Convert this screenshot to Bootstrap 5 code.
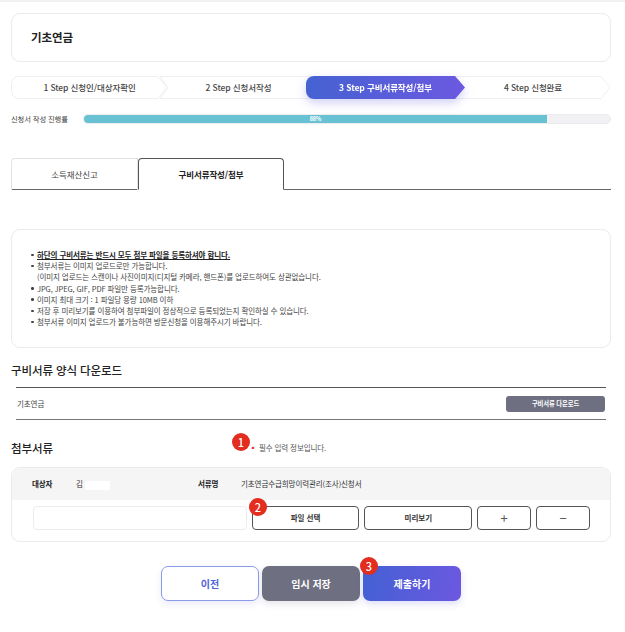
<!DOCTYPE html>
<html lang="ko">
<head>
<meta charset="utf-8">
<title>기초연금</title>
<link href="https://cdn.jsdelivr.net/npm/bootstrap@5.3.0/dist/css/bootstrap.min.css" rel="stylesheet">
<style>
html,body{margin:0;background:#fff}
body{width:625px;height:632px;overflow:hidden;font-family:"Noto Sans CJK KR","Noto Sans",sans-serif;color:#333;font-size:8px;letter-spacing:-.1px}
.topstrip{height:2px;background:#f1f1f3;margin-bottom:11px}
.pagewrap{padding:0 14px 0 11px}
.boxed{border:1px solid #ebebee;border-radius:9px;background:#fff}
.titlebox{height:49px;padding-left:19px;font-size:11.5px;font-weight:700;color:#222}
.stepbar{height:23px;margin-top:14px}
.stepitem{position:relative;height:23px;font-size:8.5px;color:#444;font-weight:500;z-index:1}
.stepitem svg{position:absolute;inset:0;width:100%;height:100%;z-index:-1;overflow:visible}
.s1{width:157px}
.s2{width:155px;margin-left:-8px;padding-left:2px}
.s3{width:159px;margin-left:-9px;color:#fff;font-weight:700;z-index:2;filter:drop-shadow(0 4px 5px rgba(90,90,220,.28))}
.s4{width:156px;margin-left:-10px}
.progrow{height:10px;margin-top:15px}
.proglabel{width:73px;font-size:7.3px;color:#444}
.progtrack{width:527px;height:10px;background:#f1f1f3;border:1px solid #ececef;border-radius:5px;overflow:hidden}
.progfill{height:100%;background:#68c2d4;color:#fff;font-size:5.5px;font-weight:700;line-height:8px;text-align:center}
.tabrow{margin-top:34px;height:32px;border-bottom:1px solid #666}
.tabitem{height:32px;font-size:8.5px}
.tabidle{width:127px;border:1px solid #e3e3e6;border-bottom:0;border-radius:4px 0 0 0;color:#444}
.tabon{width:146px;border:1px solid #555;border-bottom:1px solid #fff;border-radius:4px 4px 0 0;font-weight:700;color:#222;height:32px;background:#fff}
.noticebox{margin-top:39px;height:119px;padding:19px 16px 0 19px}
.noticebox ul{list-style:none;margin:0;padding:0;font-size:7.5px;line-height:11.2px;color:#444}
.noticebox li{position:relative;padding-left:6px}
.noticebox li.dot::before{content:"";position:absolute;left:0;top:4.5px;width:2.5px;height:2.5px;border-radius:50%;background:#444}
.strongline{font-weight:700;color:#222;text-decoration:underline}
.secthead{font-size:11.5px;font-weight:500;color:#222;line-height:16px}
.dltitle{margin-top:14px}
.dlrow{margin:9px 0 0 5px;width:590px;height:33px;border-top:1px solid #555;border-bottom:1px solid #777;padding:0 1px;font-size:7.5px;color:#444}
.dlbtn{width:99px;height:16px;background:#6f6f82;color:#fff;border-radius:3px;font-size:6.3px;font-weight:700}
.reqrow{margin-top:20px;height:16px;position:relative}
.reqnote{position:absolute;left:238px;top:2px;font-size:7.5px;color:#555}
.reqnote b{color:#e2342b;font-size:8px}
.attachbox{margin-top:11px;height:75px;overflow:hidden;background:#fff}
.attachhead{height:32px;background:#f5f5f6;font-size:7.5px;padding-left:20px}
.lbl{font-weight:700;color:#222}
.attachbody{padding:6px 20px 0 21px;gap:5px}
.fakefield{width:214px;height:24px;border:1px solid #ececef;border-radius:4px;background:#fff}
.linebtn{height:24px;border:1px solid #555;border-radius:4px;background:#fff;font-size:7.5px;font-weight:700;color:#333;padding:0}
.w107{width:108px}.w54{width:54px;font-size:13px;font-weight:400;color:#555}
.actions{margin-top:24px;height:35px;padding-left:150px;gap:3px;position:relative}
.actbtn{width:98px;height:35px;border-radius:7px;font-size:10px;font-weight:700;border:0;padding:0}
.actprev{background:#fff;border:1px solid #8a9be8;color:#4c63d8;box-shadow:0 3px 7px rgba(90,90,220,.12)}
.actsave{background:#6f6f82;color:#fff;box-shadow:0 3px 7px rgba(90,90,130,.15)}
.actsend{background:linear-gradient(100deg,#4361d3,#6c58e0);color:#fff;box-shadow:0 3px 7px rgba(90,90,220,.2)}
.markdot{position:absolute;width:18px;height:18px;border-radius:50%;background:#e22d1f;color:#fff;font-size:11px;font-weight:500;line-height:18px;text-align:center;z-index:5;letter-spacing:0}
.mask{display:inline-block;width:25px;height:9px;background:#fff;vertical-align:middle}
</style>
</head>
<body>
<div class="topstrip"></div>
<div class="pagewrap position-relative">
  <div class="boxed titlebox d-flex align-items-center">기초연금</div>

  <div class="stepbar d-flex">
    <div class="stepitem s1 d-flex align-items-center justify-content-center">
      <svg viewBox="0 0 157 23" preserveAspectRatio="none"><path d="M8 .5H147L156 11.5L147 22.5H8A7.5 7.5 0 0 1 .5 15V8A7.5 7.5 0 0 1 8 .5Z" fill="#fff" stroke="#efeff2"/></svg>
      1 Step 신청인/대상자확인</div>
    <div class="stepitem s2 d-flex align-items-center justify-content-center">
      <svg viewBox="0 0 155 23" preserveAspectRatio="none"><path d="M0 .5H150V22.5H0L8 11.5Z" fill="#fff" stroke="#efeff2"/></svg>
      2 Step 신청서작성</div>
    <div class="stepitem s3 d-flex align-items-center justify-content-center">
      <svg viewBox="0 0 159 23" preserveAspectRatio="none"><defs><linearGradient id="g" x1="0" x2="1"><stop offset="0" stop-color="#4562d2"/><stop offset="1" stop-color="#6b59e0"/></linearGradient></defs><path d="M8 0H149L159 11.5L149 23H8A8 8 0 0 1 0 15V8A8 8 0 0 1 8 0Z" fill="url(#g)"/></svg>
      3 Step 구비서류작성/첨부</div>
    <div class="stepitem s4 d-flex align-items-center justify-content-center">
      <svg viewBox="0 0 157 23" preserveAspectRatio="none"><path d="M0 .5H147L156 11.5L147 22.5H0" fill="#fff" stroke="#efeff2"/></svg>
      4 Step 신청완료</div>
  </div>

  <div class="progrow d-flex align-items-center">
    <div class="proglabel" style="width:72px">신청서 작성 진행률</div>
    <div class="progtrack" style="width:528px"><div class="progfill" style="width:88%">88%</div></div>
  </div>

  <div class="tabrow d-flex">
    <div class="tabitem tabidle d-flex align-items-center justify-content-center">소득재산신고</div>
    <div class="tabitem tabon d-flex align-items-center justify-content-center">구비서류작성/첨부</div>
  </div>

  <div class="boxed noticebox">
    <ul>
      <li class="dot strongline">하단의 구비서류는 반드시 모두 첨부 파일을 등록하셔야 합니다.</li>
      <li class="dot">첨부서류는 이미지 업로드로만 가능합니다.</li>
      <li>(이미지 업로드는 스캔이나 사진이미지(디지털 카메라, 핸드폰)를 업로드하여도 상관없습니다.</li>
      <li class="dot">JPG, JPEG, GIF, PDF 파일만 등록가능합니다.</li>
      <li class="dot">이미지 최대 크기 : 1 파일당 용량 10MB 이하</li>
      <li class="dot">저장 후 미리보기를 이용하여 첨부파일이 정상적으로 등록되었는지 확인하실 수 있습니다.</li>
      <li class="dot">첨부서류 이미지 업로드가 불가능하면 방문신청을 이용해주시기 바랍니다.</li>
    </ul>
  </div>

  <div class="secthead dltitle">구비서류 양식 다운로드</div>
  <div class="dlrow d-flex align-items-center justify-content-between">
    <span>기초연금</span>
    <span class="dlbtn d-flex align-items-center justify-content-center">구비서류 다운로드</span>
  </div>

  <div class="reqrow">
    <div class="secthead">첨부서류</div>
    <div class="reqnote"><b>▪</b> 필수 입력 정보입니다.</div>
    <span class="markdot" style="left:221px;top:-7px">1</span>
  </div>

  <div class="boxed attachbox">
    <div class="attachhead d-flex align-items-center">
      <span class="lbl" style="width:44px">대상자</span>
      <span style="width:122px">김 <span class="mask"></span></span>
      <span class="lbl" style="width:43px">서류명</span>
      <span>기초연금수급희망이력관리(조사)신청서</span>
    </div>
    <div class="attachbody d-flex">
      <div class="fakefield"></div>
      <button class="linebtn w107" type="button">파일 선택</button>
      <button class="linebtn w107" type="button">미리보기</button>
      <button class="linebtn w54" type="button">+</button>
      <button class="linebtn w54" type="button">−</button>
    </div>
  </div>
  <span class="markdot" style="left:249px;top:485px">2</span>

  <div class="actions d-flex">
    <button class="actbtn actprev" type="button">이전</button>
    <button class="actbtn actsave" type="button">임시 저장</button>
    <button class="actbtn actsend" type="button">제출하기</button>
    <span class="markdot" style="left:349px;top:-9px">3</span>
  </div>
</div>
<script src="https://cdn.jsdelivr.net/npm/bootstrap@5.3.0/dist/js/bootstrap.bundle.min.js"></script>
</body>
</html>
